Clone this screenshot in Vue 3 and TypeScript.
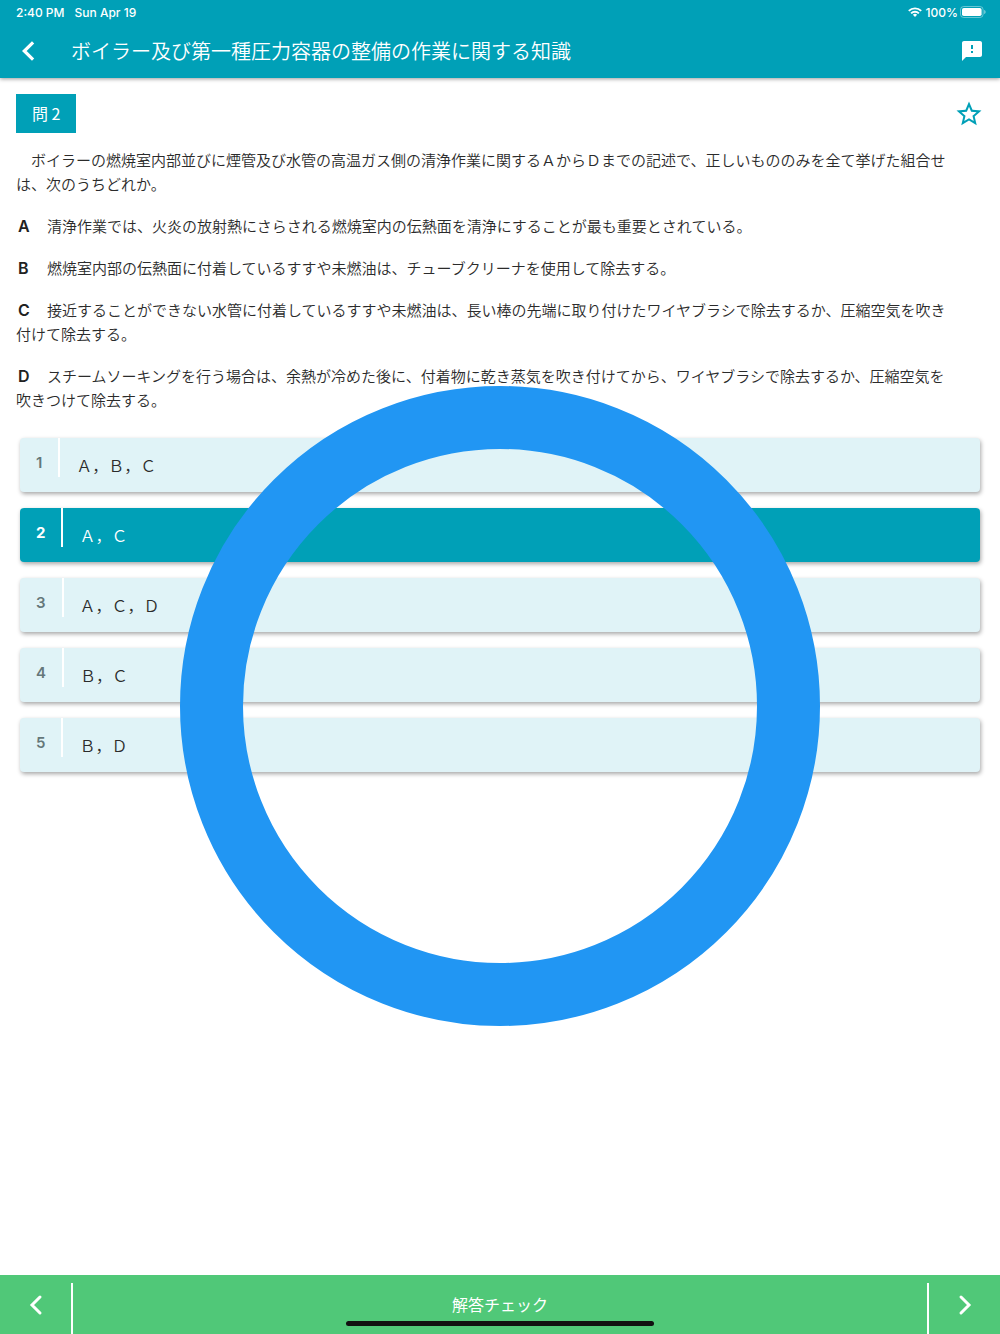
<script setup lang="ts">
import { ref } from 'vue'

interface Statement {
  label: string
  text: string
}

const statements: Statement[] = [
  { label: 'A', text: '清浄作業では、火炎の放射熱にさらされる燃焼室内の伝熱面を清浄にすることが最も重要とされている。' },
  { label: 'B', text: '燃焼室内部の伝熱面に付着しているすすや未燃油は、チューブクリーナを使用して除去する。' },
  { label: 'C', text: '接近することができない水管に付着しているすすや未燃油は、長い棒の先端に取り付けたワイヤブラシで除去するか、圧縮空気を吹き付けて除去する。' },
  { label: 'D', text: 'スチームソーキングを行う場合は、余熱が冷めた後に、付着物に乾き蒸気を吹き付けてから、ワイヤブラシで除去するか、圧縮空気を吹きつけて除去する。' },
]

const choices: string[] = ['Ａ，Ｂ，Ｃ', 'Ａ，Ｃ', 'Ａ，Ｃ，Ｄ', 'Ｂ，Ｃ', 'Ｂ，Ｄ']
const selected = ref<number>(1)
</script>

<template>
  <div class="app">
    <header class="header">
      <div class="status">
        <span>2:40 PM</span>
        <span class="date">Sun Apr 19</span>
        <svg class="wifi" width="14" height="10" viewBox="0 0 14 10" fill="none" stroke="#fff" stroke-width="1.9">
          <path d="M0.8 3.9a8.8 8.8 0 0 1 12.4 0" />
          <path d="M3.1 6.3a5.5 5.5 0 0 1 7.8 0" />
          <path d="M7 9.9 4.9 7.8a3 3 0 0 1 4.2 0z" fill="#fff" stroke="none" />
        </svg>
        <span>100%</span>
        <svg class="battery" width="26" height="12" viewBox="0 0 26 12">
          <rect x="0.5" y="0.5" width="22.6" height="11" rx="3.2" fill="none" stroke="#fff" stroke-opacity="0.4" />
          <rect x="2" y="2" width="19.6" height="8" rx="1.8" fill="#fff" />
          <path d="M24.2 4v4c.9-.4 1.4-1.100 1.400-2s-.5-1.600-1.400-2z" fill="#fff" fill-opacity="0.5" />
        </svg>
      </div>
      <div class="bar">
        <button class="icon-button" type="button" aria-label="戻る">
          <svg width="24" height="24" viewBox="0 0 24 24" fill="none" stroke="#fff" stroke-width="3.2">
            <path d="M17.100 3.400 8.300 12l8.800 8.600" />
          </svg>
        </button>
        <h1 class="title">ボイラー及び第一種圧力容器の整備の作業に関する知識</h1>
        <button class="icon-button" type="button" aria-label="報告">
          <svg width="24" height="24" viewBox="0 0 24 24" fill="#fff">
            <path d="M20 2H4c-1.100 0-1.990.9-1.990 2L2 22l4-4h14c1.100 0 2-.9 2-2V4c0-1.100-.9-2-2-2zm-7 12h-2v-2h2v2zm0-4h-2V6h2v4z" />
          </svg>
        </button>
      </div>
    </header>

    <div class="body">
      <main class="content">
        <div class="question-head">
          <span class="badge">問 2</span>
          <button class="icon-button" type="button" aria-label="お気に入り">
            <svg width="30" height="30" viewBox="0 0 24 24" fill="#00a0b7">
              <path d="M22 9.240l-7.190-.62L12 2 9.190 8.630 2 9.240l5.460 4.730L5.820 21 12 17.270 18.180 21l-1.630-7.030L22 9.240zM12 15.400l-3.760 2.270 1-4.280-3.320-2.880 4.380-.38L12 6.100l1.710 4.040 4.380.38-3.320 2.880 1 4.280L12 15.400z" />
            </svg>
          </button>
        </div>

        <div class="question">
          <p>　ボイラーの燃焼室内部並びに煙管及び水管の高温ガス側の清浄作業に関するＡからＤまでの記述で、正しいもののみを全て挙げた組合せは、次のうちどれか。</p>
          <p v-for="s in statements" :key="s.label"><b>{{ s.label }}</b>　{{ s.text }}</p>
        </div>

        <ul class="choices">
          <li v-for="(choice, i) in choices" :key="choice">
            <button
              class="choice"
              :class="{ selected: selected === i }"
              type="button"
              :aria-pressed="selected === i"
              @click="selected = i"
            >
              <span class="number">{{ i + 1 }}</span>
              <span class="answer">{{ choice }}</span>
            </button>
          </li>
        </ul>
      </main>

      <nav class="footer">
        <button class="step prev" type="button" aria-label="前の問題">
          <svg width="24" height="24" viewBox="0 0 24 24" fill="none" stroke="#fff" stroke-width="3" stroke-linecap="round">
            <path d="M16 4 8 12l8 8" />
          </svg>
        </button>
        <button class="check" type="button">解答チェック</button>
        <button class="step next" type="button" aria-label="次の問題">
          <svg width="24" height="24" viewBox="0 0 24 24" fill="none" stroke="#fff" stroke-width="3" stroke-linecap="round">
            <path d="M8 4l8 8-8 8" />
          </svg>
        </button>
        <span class="home-indicator"></span>
      </nav>

      <!-- 正解マーク -->
      <div class="result">
        <svg class="ring" viewBox="0 0 640 640" role="img" aria-label="正解">
          <circle cx="320" cy="320" r="288.500" fill="none" stroke="#2196f3" stroke-width="63" />
        </svg>
      </div>
    </div>
  </div>
</template>

<style>
body {
  margin: 0;
  background: #fff;
}
</style>

<style scoped>
.app {
  display: flex;
  flex-direction: column;
  min-height: 100vh;
  font-family: "Noto Sans CJK JP", sans-serif;
  font-size: 15px;
  color: #2b2b2b;
}

button {
  margin: 0;
  padding: 0;
  border: 0;
  background: none;
  font: inherit;
  color: inherit;
  cursor: pointer;
}

svg {
  display: block;
}

.header {
  position: relative;
  z-index: 1;
  background: #00a0b7;
  color: #fff;
  box-shadow: 0 1px 4px rgba(0, 0, 0, 0.4);
}

.status {
  display: flex;
  align-items: center;
  height: 24px;
  padding: 0 14px 0 16px;
  font-family: Inter, sans-serif;
  font-size: 12px;
  font-weight: 500;
}

.date {
  margin-left: 10px;
}

.wifi {
  margin-left: auto;
  margin-right: 4px;
}

.battery {
  margin-left: 2px;
}

.bar {
  display: flex;
  align-items: center;
  height: 54px;
  padding: 0 16px;
}

.title {
  flex: 1;
  margin: 0 0 0 31px;
  font-size: 20px;
  line-height: 24px;
  font-weight: 350;
}

.body {
  position: relative;
  flex: 1;
  display: flex;
  flex-direction: column;
}

.content {
  flex: 1;
  padding: 16px;
}

.question-head {
  display: flex;
  align-items: center;
  justify-content: space-between;
}

.badge {
  padding: 0 16px;
  background: #00a0b7;
  color: #fff;
  font-size: 16px;
  line-height: 39px;
}

.question {
  padding: 15px 31px 0 0;
  line-height: 24px;
  font-weight: 350;
}

.question p {
  margin: 0 0 18px;
}

.question b {
  display: inline-block;
  box-sizing: border-box;
  width: 16px;
  padding-left: 2px;
  font-family: Inter, sans-serif;
  font-size: 16px;
  line-height: 16px;
  font-weight: 600;
  color: #212121;
}

.choices {
  display: flex;
  flex-direction: column;
  gap: 16px;
  margin: 26px 4px 0;
  padding: 0;
  list-style: none;
}

.choice {
  display: flex;
  align-items: flex-start;
  width: 100%;
  height: 54px;
  border-radius: 4px;
  background: #e0f3f7;
  box-shadow: 1px 2px 4px rgba(0, 0, 0, 0.35);
  text-align: left;
}

.number {
  padding: 10px 16px 0;
  height: 29px;
  border-right: 2px solid #fff;
  font-family: Inter, sans-serif;
  line-height: 30px;
  font-weight: 600;
  color: #65777a;
}

.answer {
  padding-left: 16px;
  font-size: 16px;
  line-height: 54px;
  font-weight: 350;
}

.choice.selected {
  background: #00a0b7;
}

.choice.selected .number,
.choice.selected .answer {
  color: #fff;
}

.choice.selected .number {
  font-weight: 700;
}

.footer {
  position: relative;
  display: flex;
  align-items: stretch;
  height: 51px;
  padding-top: 8px;
  background: #50c878;
  color: #fff;
}

.step {
  display: flex;
  justify-content: center;
  width: 73px;
  padding-top: 10px;
}

.prev {
  border-right: 2px solid #fff;
}

.next {
  border-left: 2px solid #fff;
}

.check {
  flex: 1;
  padding-bottom: 10px;
  font-size: 16px;
}

.home-indicator {
  position: absolute;
  left: 50%;
  bottom: 8px;
  width: 308px;
  height: 5px;
  border-radius: 3px;
  background: #111;
  transform: translateX(-50%);
}

.result {
  position: absolute;
  inset: 0;
  display: flex;
  align-items: center;
  justify-content: center;
  pointer-events: none;
}

.ring {
  width: 64%;
}
</style>
